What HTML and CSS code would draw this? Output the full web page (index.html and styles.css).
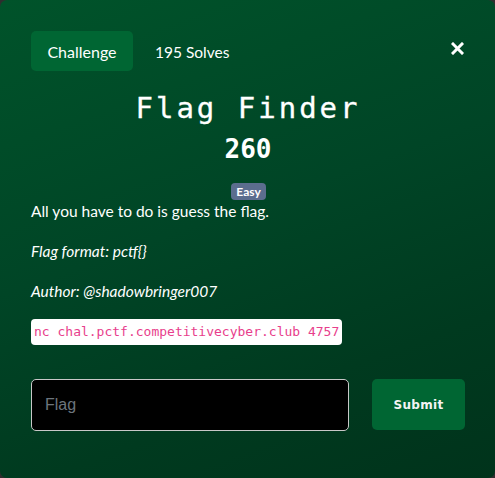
FILE: index.html
```html
<!DOCTYPE html>
<html lang="en">
<head>
<meta charset="utf-8">
<title>Flag Finder</title>
<link rel="stylesheet" href="styles.css">
</head>
<body>
<div class="modal">
  <div class="header">
    <span class="tab">Challenge</span>
    <span class="solves">195 Solves</span>
    <span class="close" aria-label="Close">
      <svg width="13" height="13" viewBox="0 0 13 13"><path d="M2 2 L11 11 M11 2 L2 11" stroke="#fff" stroke-width="3" stroke-linecap="square"/></svg>
    </span>
  </div>
  <h1 class="title">Flag Finder</h1>
  <div class="points">260</div>
  <div class="badge-row"><span class="badge">Easy</span></div>
  <div class="desc">
    <p>All you have to do is guess the flag.</p>
    <p><em>Flag format: pctf{}</em></p>
    <p><em>Author: @shadowbringer007</em></p>
    <p><code class="cmd">nc chal.pctf.competitivecyber.club 4757</code></p>
  </div>
  <form class="submit-row">
    <input class="flag-input" type="text" placeholder="Flag">
    <button class="submit" type="button">Submit</button>
  </form>
</div>
</body>
</html>
```
FILE: styles.css
```css
html, body {
  margin: 0;
  padding: 0;
  background: #2e2e2e;
}
.modal {
  box-sizing: border-box;
  width: 495px;
  height: 478px;
  border-radius: 7px;
  background: linear-gradient(160deg, #00532a 0%, #004526 45%, #003a1f 75%, #00331b 100%);
  padding: 31px 30px 0 31px;
  font-family: Lato, "Noto Sans", sans-serif;
  color: #fff;
}
.header {
  display: flex;
  align-items: center;
  height: 40px;
}
.tab {
  display: flex;
  align-items: center;
  justify-content: center;
  width: 102px;
  height: 40px;
  background: #006633;
  border-radius: 5px;
  font-size: 16px;
}
.solves {
  margin-left: 22px;
  font-size: 15.5px;
  padding-top: 2px;
}
.close {
  margin-left: auto;
  margin-right: 1px;
  display: flex;
  margin-top: -6px;
}
.title {
  margin: 19px 0 0;
  text-align: center;
  font-family: "DejaVu Sans Mono", monospace;
  font-weight: normal;
  font-size: 29px;
  letter-spacing: 3px;
  line-height: 36px;
  -webkit-text-stroke: 0.3px #fff;
}
.points {
  text-align: center;
  font-family: "DejaVu Sans Mono", monospace;
  font-weight: bold;
  font-size: 26px;
  line-height: 30px;
  margin-top: 8px;
}
.badge-row {
  text-align: center;
  margin-top: 16px;
  height: 17px;
  padding-left: 1px;
}
.badge {
  display: inline-block;
  background: #5b6d8e;
  border-radius: 4px;
  font-size: 12px;
  font-weight: bold;
  line-height: 17px;
  padding: 0 5px;
}
.desc p {
  margin: 0 0 16px;
  font-size: 15.5px;
  line-height: 24px;
}
.desc p:first-child {
  margin-top: 2px;
}
.cmd {
  display: inline-block;
  background: #fff;
  color: #e83e8c;
  font-family: "DejaVu Sans Mono", monospace;
  font-size: 13px;
  line-height: 26px;
  padding: 0 3px;
  border-radius: 4px;
  vertical-align: top;
}
.desc p:last-child {
  margin: 0;
  height: 26px;
  line-height: 26px;
}
.submit-row {
  display: flex;
  gap: 23px;
  margin: 34px 0 0;
}
.flag-input {
  box-sizing: border-box;
  flex: 1;
  height: 52px;
  background: #000;
  border: 1px solid #c8c8c8;
  border-radius: 5px;
  padding: 0 13px;
  font-family: "Liberation Sans", Arial, sans-serif;
  font-size: 16px;
  color: #fff;
}
.flag-input::placeholder {
  color: #6c757d;
}
.submit {
  width: 93px;
  height: 51px;
  background: #006633;
  border: none;
  border-radius: 5px;
  color: #f4f4f4;
  font-family: "DejaVu Sans", sans-serif;
  font-weight: bold;
  font-size: 12px;
  letter-spacing: 0.3px;
}
```
